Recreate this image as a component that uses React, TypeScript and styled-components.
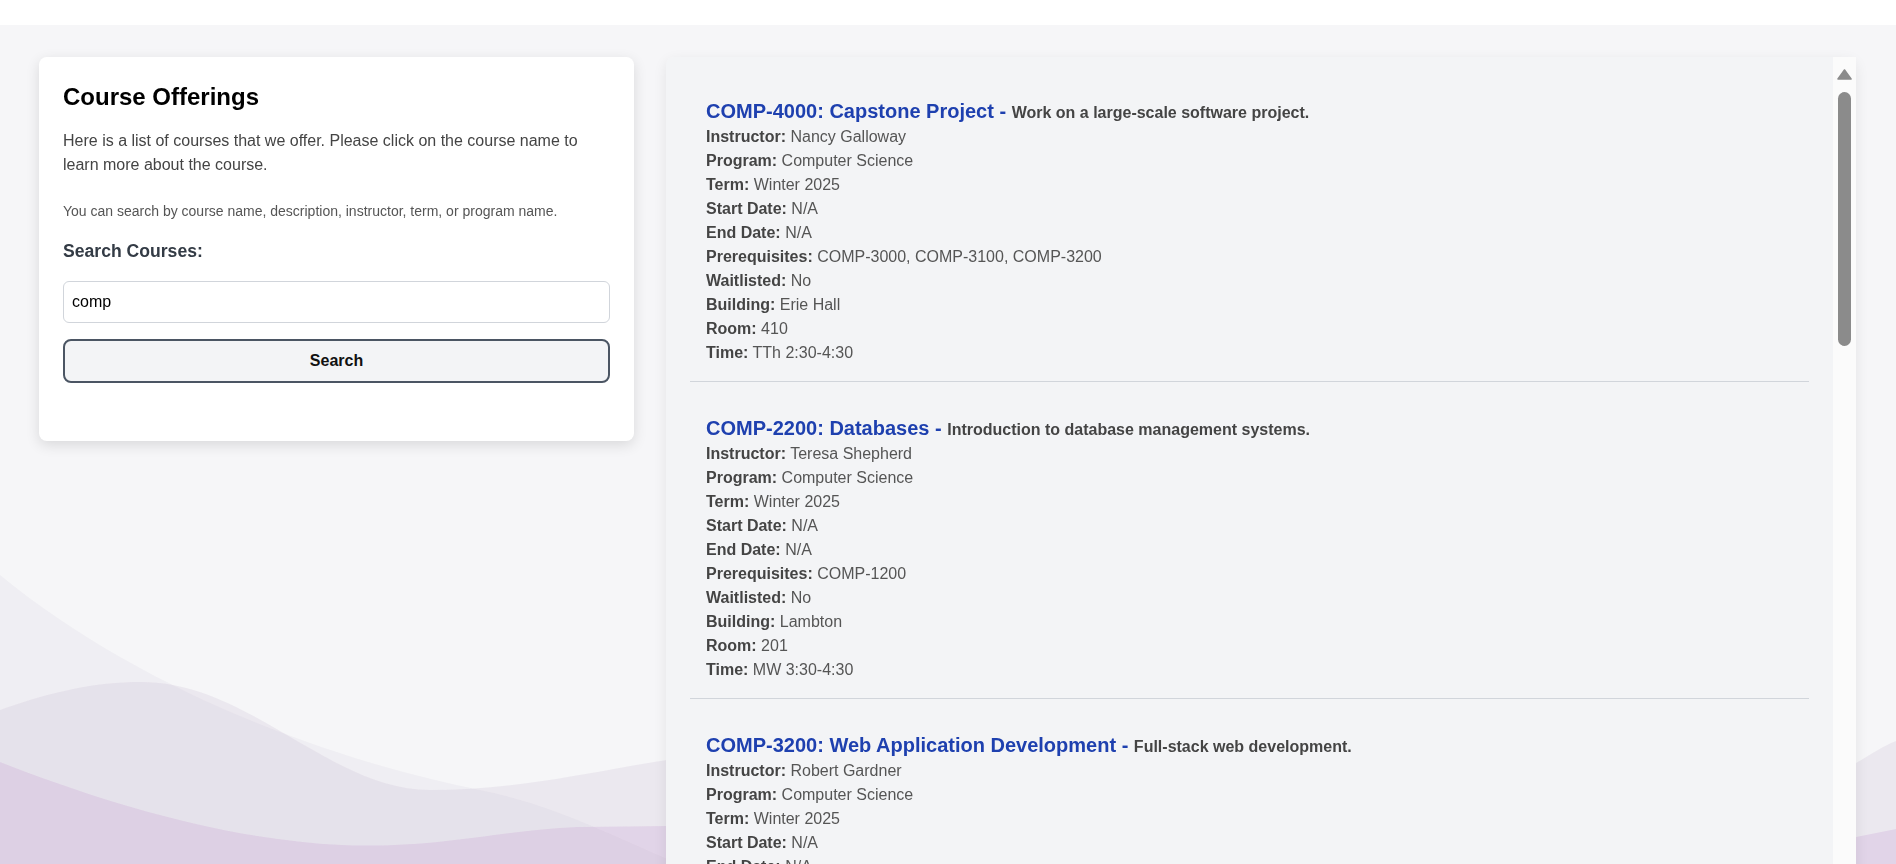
import styled, { createGlobalStyle } from "styled-components";

type Course = {
  code: string;
  name: string;
  description: string;
  instructor: string;
  program: string;
  term: string;
  startDate: string;
  endDate: string;
  prerequisites: string;
  waitlisted: string;
  building: string;
  room: string;
  time: string;
};

const courses: Course[] = [
  {
    code: "COMP-4000",
    name: "Capstone Project",
    description: "Work on a large-scale software project.",
    instructor: "Nancy Galloway",
    program: "Computer Science",
    term: "Winter 2025",
    startDate: "N/A",
    endDate: "N/A",
    prerequisites: "COMP-3000, COMP-3100, COMP-3200",
    waitlisted: "No",
    building: "Erie Hall",
    room: "410",
    time: "TTh 2:30-4:30",
  },
  {
    code: "COMP-2200",
    name: "Databases",
    description: "Introduction to database management systems.",
    instructor: "Teresa Shepherd",
    program: "Computer Science",
    term: "Winter 2025",
    startDate: "N/A",
    endDate: "N/A",
    prerequisites: "COMP-1200",
    waitlisted: "No",
    building: "Lambton",
    room: "201",
    time: "MW 3:30-4:30",
  },
  {
    code: "COMP-3200",
    name: "Web Application Development",
    description: "Full-stack web development.",
    instructor: "Robert Gardner",
    program: "Computer Science",
    term: "Winter 2025",
    startDate: "N/A",
    endDate: "N/A",
    prerequisites: "COMP-2200",
    waitlisted: "No",
    building: "Erie Hall",
    room: "305",
    time: "MW 1:00-2:30",
  },
  {
    code: "COMP-3100",
    name: "Software Engineering",
    description: "Principles of software design and development.",
    instructor: "David Morrison",
    program: "Computer Science",
    term: "Winter 2025",
    startDate: "N/A",
    endDate: "N/A",
    prerequisites: "COMP-2100",
    waitlisted: "No",
    building: "Erie Hall",
    room: "210",
    time: "MW 10:00-11:30",
  },
  {
    code: "COMP-1200",
    name: "Introduction to Programming",
    description: "Fundamentals of programming in Python.",
    instructor: "Linda Park",
    program: "Computer Science",
    term: "Winter 2025",
    startDate: "N/A",
    endDate: "N/A",
    prerequisites: "None",
    waitlisted: "No",
    building: "Lambton",
    room: "105",
    time: "TTh 9:00-10:30",
  },
];

const App = () => {
  return (
    <>
      <GlobalStyle />
      <Waves viewBox="0 0 1896 864" preserveAspectRatio="none" aria-hidden="true">
        <path
          d="M0,575 C140,690 330,760 480,790 C560,806 620,840 680,864 L0,864 Z"
          fill="rgba(200,190,210,0.14)"
        />
        <path
          d="M0,710 C50,692 95,682 141,682 C250,682 330,790 430,790 C520,790 600,770 667,760 C1100,700 1500,790 1856,763 C1870,755 1885,745 1896,741 L1896,864 L0,864 Z"
          fill="rgba(190,170,200,0.18)"
        />
        <path
          d="M0,762 C110,805 230,840 342,845 C440,849 500,830 577,827 L667,826 C1100,830 1500,850 1856,837 L1896,829 L1896,864 L0,864 Z"
          fill="rgba(200,160,210,0.27)"
        />
      </Waves>
      <TopBar />
      <Main>
        <InfoCard>
          <Heading>Course Offerings</Heading>
          <Intro>
            Here is a list of courses that we offer. Please click on the course
            name to learn more about the course.
          </Intro>
          <Hint>
            You can search by course name, description, instructor, term, or
            program name.
          </Hint>
          <SearchForm onSubmit={(e) => e.preventDefault()}>
            <SearchLabel htmlFor="course-search">Search Courses:</SearchLabel>
            <SearchInput id="course-search" type="text" defaultValue="comp" />
            <SearchButton type="submit">Search</SearchButton>
          </SearchForm>
        </InfoCard>

        <CoursePanel>
          <CourseScroll>
            {courses.map((course) => (
              <CourseItem key={course.code}>
                <CourseTitle>
                  {course.code}: {course.name} -{" "}
                  <CourseDescription>{course.description}</CourseDescription>
                </CourseTitle>
                <Detail>
                  <DetailLabel>Instructor:</DetailLabel> {course.instructor}
                </Detail>
                <Detail>
                  <DetailLabel>Program:</DetailLabel> {course.program}
                </Detail>
                <Detail>
                  <DetailLabel>Term:</DetailLabel> {course.term}
                </Detail>
                <Detail>
                  <DetailLabel>Start Date:</DetailLabel> {course.startDate}
                </Detail>
                <Detail>
                  <DetailLabel>End Date:</DetailLabel> {course.endDate}
                </Detail>
                <Detail>
                  <DetailLabel>Prerequisites:</DetailLabel> {course.prerequisites}
                </Detail>
                <Detail>
                  <DetailLabel>Waitlisted:</DetailLabel> {course.waitlisted}
                </Detail>
                <Detail>
                  <DetailLabel>Building:</DetailLabel> {course.building}
                </Detail>
                <Detail>
                  <DetailLabel>Room:</DetailLabel> {course.room}
                </Detail>
                <Detail>
                  <DetailLabel>Time:</DetailLabel> {course.time}
                </Detail>
              </CourseItem>
            ))}
          </CourseScroll>
          <ScrollTrack aria-hidden="true">
            <ScrollArrow>
              <svg width="15" height="11" viewBox="0 0 15 11">
                <path
                  d="M7.5 1 L14 10 L1 10 Z"
                  fill="#8b8b8b"
                  stroke="#8b8b8b"
                  strokeWidth="1.6"
                  strokeLinejoin="round"
                />
              </svg>
            </ScrollArrow>
            <ScrollThumb />
          </ScrollTrack>
        </CoursePanel>
      </Main>
    </>
  );
};

const GlobalStyle = createGlobalStyle`
  html, body {
    margin: 0;
    height: 100%;
    overflow: hidden;
  }
  body {
    background: #f6f6f8;
    font-family: "Liberation Sans", Arial, sans-serif;
    color: #111827;
  }
  *, *::before, *::after {
    box-sizing: border-box;
  }
`;

const Waves = styled.svg`
  position: fixed;
  left: 0;
  bottom: 0;
  width: 100%;
  height: 100%;
  z-index: 0;
  pointer-events: none;
`;

const TopBar = styled.header`
  position: relative;
  z-index: 1;
  height: 25px;
  background: #ffffff;
`;

const Main = styled.main`
  position: relative;
  z-index: 1;
  display: grid;
  grid-template-columns: 1fr 2fr;
  gap: 32px;
  align-items: start;
  padding: 32px 40px 0 39px;
`;

const InfoCard = styled.section`
  background: #ffffff;
  border-radius: 8px;
  padding: 24px 24px 58px;
  box-shadow: 0 4px 14px rgba(0, 0, 0, 0.12);
`;

const Heading = styled.h2`
  margin: 0;
  font-size: 24px;
  line-height: 32px;
  font-weight: 700;
  color: #000000;
`;

const Intro = styled.p`
  margin: 16px 0 0;
  font-size: 16px;
  line-height: 24px;
  color: #444444;
`;

const Hint = styled.p`
  margin: 24px 0 0;
  font-size: 14px;
  line-height: 20px;
  color: #555555;
`;

const SearchForm = styled.form`
  display: flex;
  flex-direction: column;
  margin-top: 17px;
`;

const SearchLabel = styled.label`
  font-size: 17.6px;
  line-height: 26.4px;
  font-weight: 700;
  color: #333b45;
`;

const SearchInput = styled.input`
  margin-top: 17px;
  width: 100%;
  padding: 8px;
  font-family: inherit;
  font-size: 16px;
  line-height: 24px;
  color: #000000;
  background: #ffffff;
  border: 1px solid #d1d5db;
  border-radius: 6px;
  outline: none;
`;

const SearchButton = styled.button`
  margin-top: 16px;
  width: 100%;
  padding: 8px;
  font-family: inherit;
  font-size: 16px;
  line-height: 24px;
  font-weight: 700;
  color: #111111;
  background: #f3f4f6;
  border: 2px solid #4b5563;
  border-radius: 8px;
  cursor: pointer;
`;

const CoursePanel = styled.section`
  display: flex;
  height: 851px;
  background: #f3f4f6;
  border-radius: 8px;
  box-shadow: 0 4px 14px rgba(0, 0, 0, 0.08);
`;

const CourseScroll = styled.div`
  flex: 1;
  min-width: 0;
  overflow-y: auto;
  scrollbar-width: none;
  padding: 8px 24px;
`;

const ScrollTrack = styled.div`
  display: flex;
  flex-direction: column;
  align-items: center;
  width: 23px;
  flex-shrink: 0;
  background: #fbfbfb;
`;

const ScrollArrow = styled.div`
  display: flex;
  justify-content: center;
  height: 30px;
  width: 100%;
  padding-top: 12px;

  svg {
    display: block;
  }
`;

const ScrollThumb = styled.div`
  margin-top: 5px;
  width: 13px;
  height: 254px;
  border-radius: 7px;
  background: #8b8b8b;
`;

const CourseItem = styled.article`
  padding: 16px;
  border-bottom: 1px solid #d1d5db;
`;

const CourseTitle = styled.h3`
  margin: 16px 0 0;
  font-size: 20px;
  line-height: 28px;
  font-weight: 700;
  color: #1e40af;
`;

const CourseDescription = styled.span`
  font-size: 16px;
  line-height: 1;
  color: #444444;
`;

const Detail = styled.p`
  margin: 0;
  font-size: 16px;
  line-height: 24px;
  color: #555555;
`;

const DetailLabel = styled.strong`
  font-weight: 700;
  color: #444444;
`;

export default App;
